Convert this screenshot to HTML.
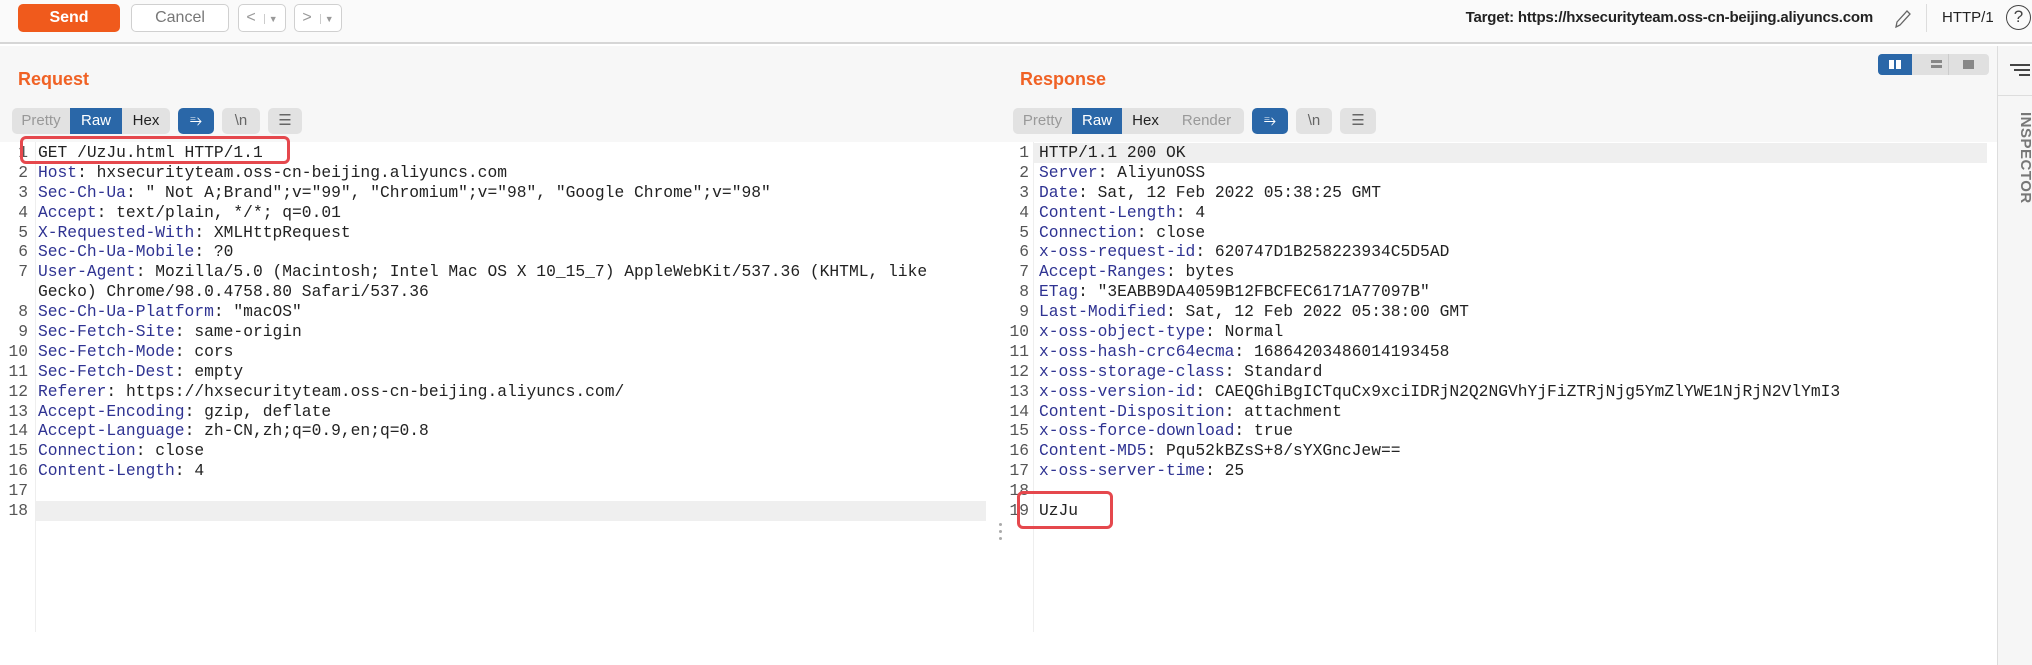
<!DOCTYPE html>
<html><head><meta charset="utf-8"><style>
*{margin:0;padding:0;box-sizing:border-box}
body{width:2032px;height:665px;background:#fff;position:relative;overflow:hidden;font-family:"Liberation Sans",sans-serif;color:#222}
.a{position:absolute}
.btn{position:absolute;border:1px solid #d0d0d0;border-radius:5px;background:#fff;color:#777;font-size:16px;text-align:center}
.seg{position:absolute;height:26px;line-height:26px;font-size:15px;text-align:center;background:#e2e2e2;color:#999}
.code{position:absolute;font-family:"Liberation Mono",monospace;font-size:16.3px;line-height:19.9px;color:#222}
.code>div{white-space:pre;height:19.9px;position:relative}
.ln{position:absolute;left:0;width:24px;text-align:right;color:#555}
.k{color:#2f3392}
.lbl{position:absolute;font-weight:bold;color:#f06225;font-size:18px}
</style></head><body>
<div class="a" style="left:0;top:0;width:2032px;height:44px;background:#fafafa;border-bottom:2px solid #d6d6d6"></div>
<div class="btn" style="left:18px;top:4px;width:102px;height:28px;line-height:26px;background:#f05a1c;border-color:#f05a1c;color:#fff;font-weight:bold">Send</div>
<div class="btn" style="left:131px;top:4px;width:98px;height:28px;line-height:26px">Cancel</div>
<div class="btn" style="left:238px;top:4px;width:48px;height:28px;line-height:26px;color:#999">&lt;<span style="font-size:9px;margin-left:8px;border-left:1px solid #ccc;padding-left:4px">▼</span></div>
<div class="btn" style="left:294px;top:4px;width:48px;height:28px;line-height:26px;color:#999">&gt;<span style="font-size:9px;margin-left:8px;border-left:1px solid #ccc;padding-left:4px">▼</span></div>
<div class="a" style="right:159px;top:9px;font-size:15px;font-weight:bold;color:#222;letter-spacing:-0.2px">Target: https://hxsecurityteam.oss-cn-beijing.aliyuncs.com</div>
<svg class="a" style="left:1892px;top:8px" width="20" height="22" viewBox="0 0 20 22"><path d="M4 19 L5 14 L15 3 L18 6 L8 17 Z M4 19 L8 17" fill="none" stroke="#666" stroke-width="1.3"/></svg>
<div class="a" style="left:1926px;top:4px;width:1px;height:28px;background:#ddd"></div>
<div class="a" style="left:1942px;top:9px;font-size:15px;color:#222">HTTP/1</div>
<div class="a" style="left:2006px;top:5px;width:25px;height:25px;border:1.5px solid #444;border-radius:50%;text-align:center;line-height:22px;font-size:17px;color:#444">?</div>

<div class="a" style="left:0;top:46px;width:1997px;height:96px;background:#f7f7f7"></div>
<div class="a" style="left:1997px;top:46px;width:35px;height:619px;background:#f6f6f6;border-left:1px solid #ddd"></div>
<div class="a" style="left:1997px;top:95px;width:35px;height:1px;background:#ddd"></div>
<div class="a" style="left:2010px;top:64px;width:20px;height:2px;background:#444"></div>
<div class="a" style="left:2014px;top:69px;width:16px;height:2px;background:#444"></div>
<div class="a" style="left:2019px;top:74px;width:11px;height:2px;background:#444"></div>
<div class="a" style="left:2008px;top:112px;width:26px;height:110px;writing-mode:vertical-rl;font-size:15px;font-weight:bold;color:#777;letter-spacing:0.5px">INSPECTOR</div>

<div class="a" style="left:1878px;top:54px;width:111px;height:21px;background:#e0e0e0;border-radius:4px"></div>
<div class="a" style="left:1878px;top:54px;width:34px;height:21px;background:#2a67a8;border-radius:4px 0 0 4px"></div>
<div class="a" style="left:1889px;top:60px;width:5px;height:9px;background:#fff"></div>
<div class="a" style="left:1896px;top:60px;width:5px;height:9px;background:#fff"></div>
<div class="a" style="left:1931px;top:60px;width:11px;height:3px;background:#888"></div>
<div class="a" style="left:1931px;top:65px;width:11px;height:3px;background:#888"></div>
<div class="a" style="left:1948px;top:54px;width:1px;height:21px;background:#ccc"></div>
<div class="a" style="left:1963px;top:60px;width:11px;height:9px;background:#888"></div>

<div class="lbl" style="left:18px;top:69px">Request</div>
<div class="seg" style="left:12px;top:108px;width:58px;border-radius:5px 0 0 5px">Pretty</div>
<div class="seg" style="left:70px;top:108px;width:52px;background:#2a67a8;color:#fff">Raw</div>
<div class="seg" style="left:122px;top:108px;width:48px;color:#222;border-radius:0 5px 5px 0">Hex</div>
<div class="seg" style="left:178px;top:108px;width:36px;background:#2a67a8;color:#fff;border-radius:5px">⥱</div>
<div class="seg" style="left:222px;top:108px;width:38px;color:#666;border-radius:5px">\n</div>
<div class="seg" style="left:268px;top:108px;width:34px;color:#666;border-radius:5px">☰</div>

<div class="a" style="left:35px;top:142px;width:1px;height:490px;background:#eee"></div>
<div class="a" style="left:36px;top:501px;width:950px;height:20px;background:#efefef"></div>
<div class="code" style="left:4px;top:143px">
<div><span class="ln">1</span><span style="margin-left:34px">GET /UzJu.html HTTP/1.1</span></div>
<div><span class="ln">2</span><span style="margin-left:34px"><span class="k">Host</span>: hxsecurityteam.oss-cn-beijing.aliyuncs.com</span></div>
<div><span class="ln">3</span><span style="margin-left:34px"><span class="k">Sec-Ch-Ua</span>: " Not A;Brand";v="99", "Chromium";v="98", "Google Chrome";v="98"</span></div>
<div><span class="ln">4</span><span style="margin-left:34px"><span class="k">Accept</span>: text/plain, */*; q=0.01</span></div>
<div><span class="ln">5</span><span style="margin-left:34px"><span class="k">X-Requested-With</span>: XMLHttpRequest</span></div>
<div><span class="ln">6</span><span style="margin-left:34px"><span class="k">Sec-Ch-Ua-Mobile</span>: ?0</span></div>
<div><span class="ln">7</span><span style="margin-left:34px"><span class="k">User-Agent</span>: Mozilla/5.0 (Macintosh; Intel Mac OS X 10_15_7) AppleWebKit/537.36 (KHTML, like</span></div>
<div><span style="margin-left:34px">Gecko) Chrome/98.0.4758.80 Safari/537.36</span></div>
<div><span class="ln">8</span><span style="margin-left:34px"><span class="k">Sec-Ch-Ua-Platform</span>: "macOS"</span></div>
<div><span class="ln">9</span><span style="margin-left:34px"><span class="k">Sec-Fetch-Site</span>: same-origin</span></div>
<div><span class="ln">10</span><span style="margin-left:34px"><span class="k">Sec-Fetch-Mode</span>: cors</span></div>
<div><span class="ln">11</span><span style="margin-left:34px"><span class="k">Sec-Fetch-Dest</span>: empty</span></div>
<div><span class="ln">12</span><span style="margin-left:34px"><span class="k">Referer</span>: https://hxsecurityteam.oss-cn-beijing.aliyuncs.com/</span></div>
<div><span class="ln">13</span><span style="margin-left:34px"><span class="k">Accept-Encoding</span>: gzip, deflate</span></div>
<div><span class="ln">14</span><span style="margin-left:34px"><span class="k">Accept-Language</span>: zh-CN,zh;q=0.9,en;q=0.8</span></div>
<div><span class="ln">15</span><span style="margin-left:34px"><span class="k">Connection</span>: close</span></div>
<div><span class="ln">16</span><span style="margin-left:34px"><span class="k">Content-Length</span>: 4</span></div>
<div><span class="ln">17</span></div>
<div><span class="ln">18</span></div>
</div>
<div class="a" style="left:20px;top:136px;width:270px;height:28px;border:3px solid #e5484d;border-radius:6px"></div>

<div class="a" style="left:999px;top:523px;width:3px;height:3px;background:#aaa;border-radius:50%"></div>
<div class="a" style="left:999px;top:530px;width:3px;height:3px;background:#aaa;border-radius:50%"></div>
<div class="a" style="left:999px;top:537px;width:3px;height:3px;background:#aaa;border-radius:50%"></div>

<div class="lbl" style="left:1020px;top:69px">Response</div>
<div class="seg" style="left:1013px;top:108px;width:59px;border-radius:5px 0 0 5px">Pretty</div>
<div class="seg" style="left:1072px;top:108px;width:50px;background:#2a67a8;color:#fff">Raw</div>
<div class="seg" style="left:1122px;top:108px;width:47px;color:#222">Hex</div>
<div class="seg" style="left:1169px;top:108px;width:75px;border-radius:0 5px 5px 0">Render</div>
<div class="seg" style="left:1252px;top:108px;width:36px;background:#2a67a8;color:#fff;border-radius:5px">⥱</div>
<div class="seg" style="left:1296px;top:108px;width:36px;color:#666;border-radius:5px">\n</div>
<div class="seg" style="left:1340px;top:108px;width:36px;color:#666;border-radius:5px">☰</div>

<div class="a" style="left:1033px;top:142px;width:1px;height:490px;background:#eee"></div>
<div class="a" style="left:1034px;top:143px;width:953px;height:20px;background:#efefef"></div>
<div class="code" style="left:1005px;top:143px">
<div><span class="ln">1</span><span style="margin-left:34px">HTTP/1.1 200 OK</span></div>
<div><span class="ln">2</span><span style="margin-left:34px"><span class="k">Server</span>: AliyunOSS</span></div>
<div><span class="ln">3</span><span style="margin-left:34px"><span class="k">Date</span>: Sat, 12 Feb 2022 05:38:25 GMT</span></div>
<div><span class="ln">4</span><span style="margin-left:34px"><span class="k">Content-Length</span>: 4</span></div>
<div><span class="ln">5</span><span style="margin-left:34px"><span class="k">Connection</span>: close</span></div>
<div><span class="ln">6</span><span style="margin-left:34px"><span class="k">x-oss-request-id</span>: 620747D1B258223934C5D5AD</span></div>
<div><span class="ln">7</span><span style="margin-left:34px"><span class="k">Accept-Ranges</span>: bytes</span></div>
<div><span class="ln">8</span><span style="margin-left:34px"><span class="k">ETag</span>: "3EABB9DA4059B12FBCFEC6171A77097B"</span></div>
<div><span class="ln">9</span><span style="margin-left:34px"><span class="k">Last-Modified</span>: Sat, 12 Feb 2022 05:38:00 GMT</span></div>
<div><span class="ln">10</span><span style="margin-left:34px"><span class="k">x-oss-object-type</span>: Normal</span></div>
<div><span class="ln">11</span><span style="margin-left:34px"><span class="k">x-oss-hash-crc64ecma</span>: 16864203486014193458</span></div>
<div><span class="ln">12</span><span style="margin-left:34px"><span class="k">x-oss-storage-class</span>: Standard</span></div>
<div><span class="ln">13</span><span style="margin-left:34px"><span class="k">x-oss-version-id</span>: CAEQGhiBgICTquCx9xciIDRjN2Q2NGVhYjFiZTRjNjg5YmZlYWE1NjRjN2VlYmI3</span></div>
<div><span class="ln">14</span><span style="margin-left:34px"><span class="k">Content-Disposition</span>: attachment</span></div>
<div><span class="ln">15</span><span style="margin-left:34px"><span class="k">x-oss-force-download</span>: true</span></div>
<div><span class="ln">16</span><span style="margin-left:34px"><span class="k">Content-MD5</span>: Pqu52kBZsS+8/sYXGncJew==</span></div>
<div><span class="ln">17</span><span style="margin-left:34px"><span class="k">x-oss-server-time</span>: 25</span></div>
<div><span class="ln">18</span></div>
<div><span class="ln">19</span><span style="margin-left:34px">UzJu</span></div>
</div>
<div class="a" style="left:1017px;top:491px;width:96px;height:38px;border:3px solid #e5484d;border-radius:6px"></div>
</body></html>
